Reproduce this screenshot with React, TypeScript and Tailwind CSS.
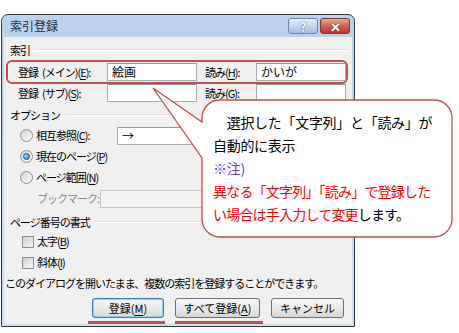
import React from 'react';

const Acc = ({ children }: { children: React.ReactNode }) => (
  <span className="underline underline-offset-[2px]">{children}</span>
);

const Radio = ({ checked }: { checked?: boolean }) => (
  <span className="w-[13px] h-[13px] rounded-full border border-[#8e8f8f] bg-linear-to-br from-[#d4d4d4] to-[#fafafa] flex items-center justify-center shrink-0">
    {checked && (
      <span className="w-[7px] h-[7px] rounded-full bg-[radial-gradient(circle_at_35%_35%,#a6dcff,#1b6fc0)] border border-[#1c5a94]" />
    )}
  </span>
);

const Check = () => (
  <span className="w-[12px] h-[12px] border border-[#8e8f8f] bg-linear-to-br from-[#cfcfcf] to-[#f7f7f7] shrink-0" />
);

const Input = ({ value, className }: { value?: string; className?: string }) => (
  <div
    className={`h-[18px] bg-white border border-[#abadb3] border-t-[#8f959a] flex items-center pl-[4px] text-[12px] tracking-normal ${className ?? ''}`}
  >
    {value}
  </div>
);

const Group = ({ label }: { label: string }) => (
  <div className="h-[16px] flex items-center pl-[6px] pr-[4px]">
    <span>{label}</span>
    <span className="flex-1 ml-[5px] h-[2px] border-t border-[#d5dfe5] border-b border-b-white" />
  </div>
);

const Btn = ({ children, focus, w }: { children: React.ReactNode; focus?: boolean; w: string }) => (
  <div
    className={`${w} h-[20px] rounded-[3px] border flex items-center justify-center bg-linear-to-b from-[#f4f4f4] via-[#ebebeb] to-[#d6d6d6] ${
      focus ? 'border-[#3c7fb1] shadow-[inset_0_0_0_1px_#8ed0f0]' : 'border-[#707070]'
    }`}
  >
    {children}
  </div>
);

export default function App() {
  return (
    <div className="w-[459px] h-[333px] bg-white relative overflow-hidden text-[#000] font-['Noto_Sans_CJK_JP','Noto_Sans',sans-serif]">
      {/* dialog */}
      <div className="ml-[1px] mt-[14px] w-[354px] h-[313px] border border-[#3a3a3a] rounded-t-[7px] bg-linear-to-b from-[#bcd1ea] to-[#cadcf0] flex flex-col px-[2px] pb-[2px]">
        <div className="h-[22px] flex items-start justify-between pl-[6px] pr-[2px]">
          <span className="text-[12px] leading-[20px] mt-[1px] text-[#1c2f45]">索引登録</span>
          <div className="flex gap-[2px] mt-[3px]">
            <div className="w-[30px] h-[16px] rounded-[3px] border border-[#6d85a3] bg-linear-to-b from-[#e4eef9] via-[#c3d6ec] to-[#a6c0df] flex items-center justify-center text-white font-bold text-[13px] leading-none [text-shadow:0_0_1px_#3a5270,0_0_1px_#3a5270]">
              ?
            </div>
            <div className="w-[30px] h-[16px] rounded-[3px] border border-[#7a3a2f] bg-linear-to-b from-[#e9a898] via-[#d0624e] to-[#b93a24] flex items-center justify-center text-white font-bold text-[13px] leading-none [text-shadow:0_0_1px_#5a1a10,0_0_1px_#5a1a10]">
              ✕
            </div>
          </div>
        </div>

        <div className="flex-1 bg-[#f0f0f0] text-[11px] tracking-[-1px] flex flex-col">
          <div className="mt-[5px]">
            <Group label="索引" />
          </div>

          <div className="mt-[2px] ml-[2px] w-[342px] h-[24px] border-2 border-[#c0504d] rounded-[6px] flex items-center pl-[10px]">
            <span className="w-[89px]">
              登録<span className="ml-[4px]">(メイン)(<Acc>E</Acc>):</span>
            </span>
            <Input value="絵画" className="w-[90px]" />
            <span className="w-[51px] ml-[8px]">
              読み(<Acc>H</Acc>):
            </span>
            <Input value="かいが" className="w-[90px]" />
          </div>

          <div className="h-[18px] flex items-center pl-[14px]">
            <span className="w-[89px]">
              登録<span className="ml-[4px]">(サブ)(<Acc>S</Acc>):</span>
            </span>
            <Input className="w-[90px]" />
            <span className="w-[51px] ml-[8px]">
              読み(<Acc>G</Acc>):
            </span>
            <Input className="w-[90px]" />
          </div>

          <div className="mt-[5px]">
            <Group label="オプション" />
          </div>

          <div className="mt-[2px] h-[21px] flex items-center pl-[16px] gap-[3px]">
            <Radio />
            <span className="w-[78px]">
              相互参照(<Acc>C</Acc>):
            </span>
            <Input value="→" className="w-[150px] h-[17px]" />
          </div>
          <div className="h-[21px] flex items-center pl-[16px] gap-[3px]">
            <Radio checked />
            <span>
              現在のページ(<Acc>P</Acc>)
            </span>
          </div>
          <div className="h-[21px] flex items-center pl-[16px] gap-[3px]">
            <Radio />
            <span>
              ページ範囲(<Acc>N</Acc>)
            </span>
          </div>
          <div className="h-[21px] flex items-center pl-[33px]">
            <span className="w-[63px] text-[#8d8d8d]">ブックマーク:</span>
            <div className="w-[200px] h-[18px] border border-[#c2c5c9] bg-[#f4f4f4]" />
          </div>

          <div className="mt-[5px]">
            <Group label="ページ番号の書式" />
          </div>

          <div className="mt-[1px] h-[21px] flex items-center pl-[18px] gap-[3px]">
            <Check />
            <span>
              太字(<Acc>B</Acc>)
            </span>
          </div>
          <div className="h-[21px] flex items-center pl-[18px] gap-[3px]">
            <Check />
            <span>
              斜体(<Acc>I</Acc>)
            </span>
          </div>

          <div className="mt-[2px] h-[16px] flex items-center pl-[1px]">
            このダイアログを開いたまま、複数の索引を登録することができます。
          </div>

          <div className="mt-[7px] flex gap-[11px] pl-[88px] tracking-normal">
            <Btn w="w-[72px]" focus>
              登録(<Acc>M</Acc>)
            </Btn>
            <Btn w="w-[85px]">
              すべて登録(<Acc>A</Acc>)
            </Btn>
            <Btn w="w-[73px]">キャンセル</Btn>
          </div>

          <div className="mt-[3px] h-[3px] flex pl-[84px]">
            <span className="w-[77px] h-[3px] bg-[#c0504d]" />
            <span className="w-[88px] h-[3px] bg-[#c0504d] ml-[10px]" />
          </div>
        </div>
      </div>

      {/* callout */}
      <svg className="absolute inset-0 pointer-events-none" width="459" height="333" viewBox="0 0 459 333">
        <path
          d="M220 100 H434 A18 18 0 0 1 452 118 V219 A18 18 0 0 1 434 237 H220 A18 18 0 0 1 202 219 V158 L153 88 L202 122 V118 A18 18 0 0 1 220 100 Z"
          fill="#ffffff"
          stroke="#c0504d"
          strokeWidth="1.3"
        />
      </svg>
      <div className="absolute left-[213px] top-[111px] w-[238px] text-[14px] leading-[23px] tracking-[-0.3px]">
        <div>　選択した「文字列」と「読み」が</div>
        <div>自動的に表示</div>
        <div className="text-[#6a3cc8]">※注)</div>
        <div className="text-[#ff0000] tracking-[-0.8px]">異なる「文字列」「読み」で登録した</div>
        <div className="tracking-[-0.8px]">
          <span className="text-[#ff0000]">い場合は手入力して変更</span>します。
        </div>
      </div>
    </div>
  );
}
